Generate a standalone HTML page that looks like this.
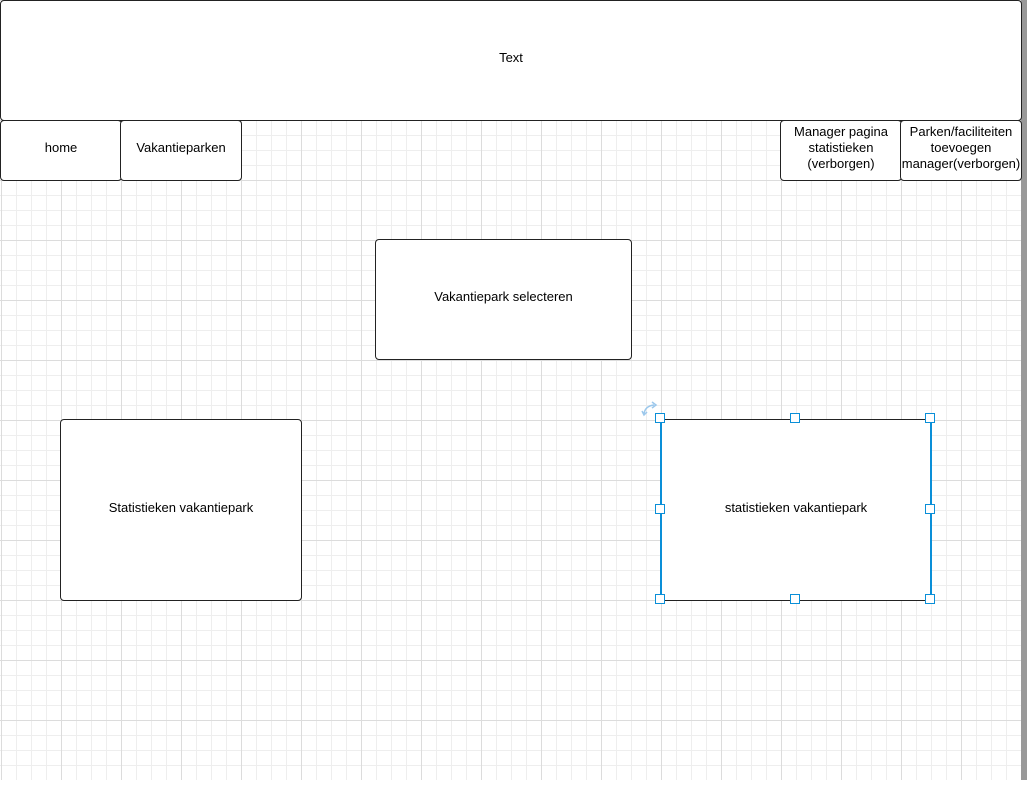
<!DOCTYPE html>
<html><head><style>
body{margin:0;width:1027px;height:794px;background:#fff;position:relative;overflow:hidden;font-family:"Liberation Sans",sans-serif;font-size:13px;color:#000}
.grid{position:absolute;left:0;top:0;width:1021px;height:780px;
background-image:
linear-gradient(to right,#dcdcdc 1px,transparent 1px),
linear-gradient(to bottom,#dcdcdc 1px,transparent 1px),
linear-gradient(to right,#eeeeee 1px,transparent 1px),
linear-gradient(to bottom,#eeeeee 1px,transparent 1px);
background-size:60px 60px,60px 60px,15px 15px,15px 15px;
background-position:1px 0,0 0,1px 0,0 0}
.sb{position:absolute;left:1021px;top:0;width:6px;height:780px;background:#999}
.b{position:absolute;box-sizing:border-box;border:1.5px solid #222;border-radius:4px;background:#fff;display:flex;align-items:center;justify-content:center;text-align:center;line-height:16px;padding-bottom:5px}
.h{position:absolute;width:10px;height:10px;border:1px solid #0a8fd8;background:#fff;box-sizing:border-box}
</style></head><body>
<div class="grid"></div><div class="sb"></div>
<div class="b" style="left:0;top:0;width:1022px;height:121px">Text</div>
<div class="b" style="left:0;top:120px;width:122px;height:61px">home</div>
<div class="b" style="left:120px;top:120px;width:122px;height:61px">Vakantieparken</div>
<div class="b" style="left:780px;top:120px;width:122px;height:61px">Manager pagina<br>statistieken<br>(verborgen)</div>
<div class="b" style="left:900px;top:120px;width:122px;height:61px;white-space:nowrap">Parken/faciliteiten<br>toevoegen<br>manager(verborgen)</div>
<div class="b" style="left:375px;top:239px;width:257px;height:121px">Vakantiepark selecteren</div>
<div class="b" style="left:60px;top:419px;width:242px;height:182px">Statistieken vakantiepark</div>
<div class="b" style="left:660px;top:419px;width:272px;height:182px;border-radius:2px;border-color:#222;border-left:2px solid #0a8fd8;border-right:2px solid #0a8fd8">statistieken vakantiepark</div>
<div class="h" style="left:655px;top:413px"></div>
<div class="h" style="left:790px;top:413px"></div>
<div class="h" style="left:925px;top:413px"></div>
<div class="h" style="left:655px;top:504px"></div>
<div class="h" style="left:925px;top:504px"></div>
<div class="h" style="left:655px;top:594px"></div>
<div class="h" style="left:790px;top:594px"></div>
<div class="h" style="left:925px;top:594px"></div>
<svg style="position:absolute;left:641px;top:400px" width="20" height="18" viewBox="0 0 20 18"><path d="M3 14 Q4 6 13 5" fill="none" stroke="#9cc8ec" stroke-width="1.5"/><path d="M11 2 L15 5 L11 8" fill="none" stroke="#9cc8ec" stroke-width="1.5"/><path d="M1 11 L3 15 L6 12" fill="none" stroke="#9cc8ec" stroke-width="1.5"/></svg>
</body></html>
